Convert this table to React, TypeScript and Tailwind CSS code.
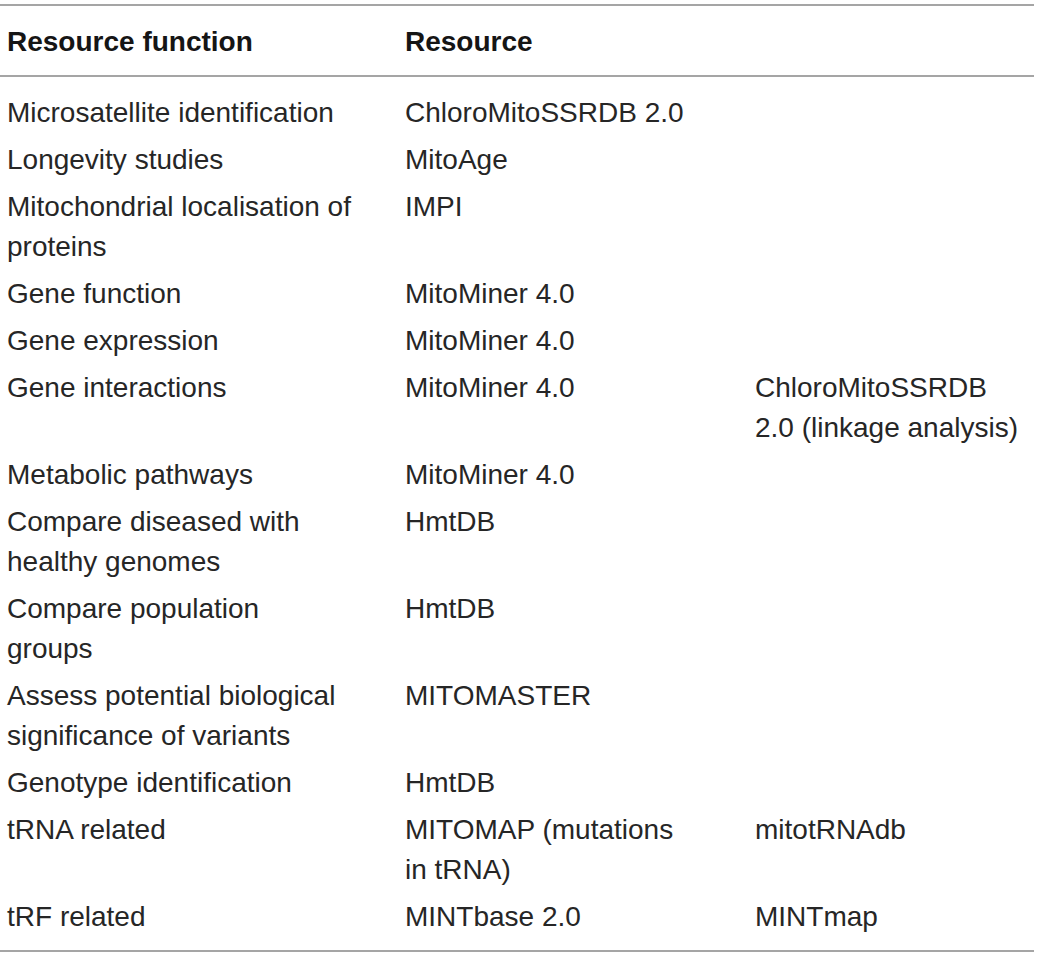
const ROWS: { fn: string[]; res: string[]; extra?: string[] }[] = [
  { fn: ["Microsatellite identification"], res: ["ChloroMitoSSRDB 2.0"] },
  { fn: ["Longevity studies"], res: ["MitoAge"] },
  { fn: ["Mitochondrial localisation of", "proteins"], res: ["IMPI"] },
  { fn: ["Gene function"], res: ["MitoMiner 4.0"] },
  { fn: ["Gene expression"], res: ["MitoMiner 4.0"] },
  {
    fn: ["Gene interactions"],
    res: ["MitoMiner 4.0"],
    extra: ["ChloroMitoSSRDB", "2.0 (linkage analysis)"],
  },
  { fn: ["Metabolic pathways"], res: ["MitoMiner 4.0"] },
  { fn: ["Compare diseased with", "healthy genomes"], res: ["HmtDB"] },
  { fn: ["Compare population", "groups"], res: ["HmtDB"] },
  { fn: ["Assess potential biological", "significance of variants"], res: ["MITOMASTER"] },
  { fn: ["Genotype identification"], res: ["HmtDB"] },
  { fn: ["tRNA related"], res: ["MITOMAP (mutations", "in tRNA)"], extra: ["mitotRNAdb"] },
  { fn: ["tRF related"], res: ["MINTbase 2.0"], extra: ["MINTmap"] },
];

function Lines({ lines }: { lines?: string[] }) {
  if (!lines) return <div />;
  return (
    <div>
      {lines.map((line) => (
        <div key={line} className="whitespace-nowrap">
          {line}
        </div>
      ))}
    </div>
  );
}

export default function App() {
  return (
    <div
      className="w-[1040px] h-[958px] bg-white pt-[4px] text-[#262626]"
      style={{ fontFamily: '"Liberation Sans", Arial, sans-serif' }}
    >
      <div className="w-[1034px] border-t-2 border-b-2 border-[#a5a5a5]">
        <div className="grid grid-cols-[405px_350px_1fr] h-[71px] items-center border-b-2 border-[#a5a5a5] text-[28px] font-bold text-[#151515]">
          <div className="pl-[7px] pt-[2px]">Resource function</div>
          <div className="pt-[2px]">Resource</div>
          <div />
        </div>

        <div className="flex flex-col gap-[7px] pt-[16px] pb-[13px] text-[28px] leading-[40px]">
          {ROWS.map((row) => (
            <div key={row.fn[0]} className="grid grid-cols-[405px_350px_1fr]">
              <div className="pl-[7px]">
                <Lines lines={row.fn} />
              </div>
              <Lines lines={row.res} />
              <Lines lines={row.extra} />
            </div>
          ))}
        </div>
      </div>
    </div>
  );
}
